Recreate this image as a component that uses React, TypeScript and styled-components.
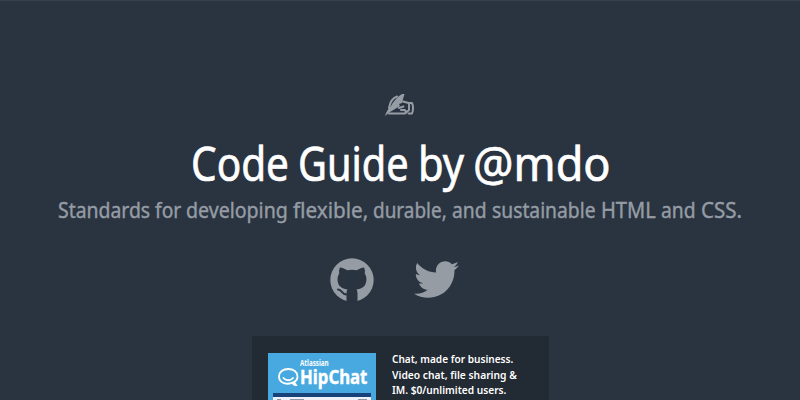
import React, { useLayoutEffect, useRef, useState } from 'react';
import styled, { createGlobalStyle } from 'styled-components';
import { FaTwitter } from 'react-icons/fa';

const GlobalStyle = createGlobalStyle`
  * { box-sizing: border-box; }
  body {
    margin: 0;
    overflow: hidden;
    background: #2a3441;
    font-family: 'Noto Sans', 'Open Sans', sans-serif;
  }
`;

const Masthead = styled.header`
  height: 400px;
  overflow: hidden;
  border-top: 1px solid #36414e;
  background: #2a3441;
  display: flex;
  flex-direction: column;
  align-items: center;
`;

const HandIcon = styled.svg`
  display: block;
  flex: none;
  width: 30px;
  height: 26px;
  margin-top: 91px;
  color: #959ca4;
`;

const Line = styled.div<{ $height: number }>`
  display: flex;
  flex: none;
  height: ${p => p.$height}px;
  line-height: ${p => p.$height}px;
`;

const Title = styled(Line).attrs({ as: 'h1' })`
  margin: 15px 0 0;
  padding-left: 1px;
  color: #fff;
  font-size: 48px;
  font-weight: 400;
  -webkit-text-stroke: 0.7px #fff;
`;

const Lead = styled(Line).attrs({ as: 'p' })`
  margin: 1px 0 0;
  color: #959ca4;
  font-size: 21.5px;
  font-weight: 400;
  -webkit-text-stroke: 0.4px #959ca4;
`;

const WordBox = styled.span<{ $width: number; $gap: number }>`
  flex: none;
  width: ${p => p.$width}px;
  margin-right: ${p => p.$gap}px;
  white-space: nowrap;

  &:last-child { margin-right: 0; }
`;

const Glyphs = styled.span`
  display: inline-block;
  transform-origin: 0 50%;
`;

/* A word condensed horizontally so that it fills its width exactly. */
function Word({ text, width, gap = 0 }: { text: string; width: number; gap?: number }) {
  const ref = useRef<HTMLSpanElement>(null);
  const [scale, setScale] = useState(1);
  useLayoutEffect(() => {
    if (ref.current) setScale(width / ref.current.offsetWidth);
  }, [width]);
  return (
    <WordBox $width={width} $gap={gap}>
      <Glyphs ref={ref} style={{ transform: `scaleX(${scale})` }}>{text}</Glyphs>
    </WordBox>
  );
}

const Social = styled.nav`
  display: flex;
  flex: none;
  gap: 40px;
  height: 45px;
  margin: 31px 11px 0 0;
  color: #959ca4;
`;

const SocialLink = styled.a`
  display: flex;
  align-items: center;
  color: inherit;
`;

const Octocat = styled.svg`
  width: 44px;
  height: 44px;
`;

const Ad = styled.aside`
  display: flex;
  flex: none;
  width: 297px;
  height: 130px;
  margin-top: 34px;
  padding: 17px 16px;
  background: #222a33;
`;

const Banner = styled.div`
  flex: none;
  width: 108px;
  height: 100px;
  background: #48a9e0;
  color: #fff;
  overflow: hidden;
`;

const Company = styled.div`
  height: 8px;
  margin: 6px 0 0 32px;
  font-size: 8px;
  line-height: 8px;
  font-weight: 700;
`;

const Brand = styled.div`
  display: flex;
  height: 20px;
  margin-left: 10px;
  gap: 1px;
  font-size: 19px;
  line-height: 20px;
  font-weight: 700;
  -webkit-text-stroke: 0.4px #fff;
`;

const Bubble = styled.svg`
  flex: none;
  width: 21px;
  height: 20px;
`;

const AppWindow = styled.div`
  width: 98px;
  height: 60px;
  margin: 6px 0 0 5px;
  background: #eef1f6;
  border-top: 4px solid #17437a;
`;

const Toolbar = styled.div`
  display: flex;
  align-items: center;
  gap: 9px;
  height: 4px;
  padding: 0 4px;
`;

const Mark = styled.span<{ $width: number; $end?: boolean }>`
  width: ${p => p.$width}px;
  height: 1px;
  margin-left: ${p => (p.$end ? 'auto' : '0')};
  background: #8b97a8;
`;

const Copy = styled.div`
  margin: -2px 0 0 15px;
  padding-left: 1px;
  color: #fff;
  font-size: 11.5px;
  font-weight: 600;
`;

const titleWords = [
  { text: 'Code', width: 98, gap: 9 },
  { text: 'Guide', width: 111, gap: 9 },
  { text: 'by', width: 46, gap: 9 },
  { text: '@mdo', width: 138 },
];

const leadWords = [
  { text: 'Standards', width: 92, gap: 5 },
  { text: 'for', width: 26, gap: 5 },
  { text: 'developing', width: 102, gap: 5 },
  { text: 'flexible,', width: 75, gap: 5 },
  { text: 'durable,', width: 74, gap: 5 },
  { text: 'and', width: 35, gap: 5 },
  { text: 'sustainable', width: 104, gap: 5 },
  { text: 'HTML', width: 55, gap: 5 },
  { text: 'and', width: 35, gap: 5 },
  { text: 'CSS.', width: 41 },
];

const copyLines = [
  { text: 'Chat, made for business.', width: 121 },
  { text: 'Video chat, file sharing &', width: 125 },
  { text: 'IM. $0/unlimited users.', width: 114 },
];

export default function App() {
  return (
    <>
      <GlobalStyle />
      <Masthead>
        <HandIcon viewBox="0 0 30 26" fill="none" stroke="currentColor" strokeWidth="2" strokeLinecap="round" strokeLinejoin="round">
          <path d="M0 24C1 20 3 17 6 14C8 10 12 5 17 2L19.500 2L18 7L17 11L14 12L15 14L10 17L5 20Z" fill="currentColor" stroke="none" />
          <path d="M4 16C5 10 7.500 6 12 4.500M4 21.500H19C21 21.500 21.500 19 19.500 18H16M18 9.500L23.500 11M24 11H27C28.300 14 28.300 18 27 21.500H23.500M24 11V18L20 21.500M14 16L18.500 14.500" />
        </HandIcon>
        <Title $height={60}>
          {titleWords.map(w => <Word key={w.text} {...w} />)}
        </Title>
        <Lead $height={32}>
          {leadWords.map((w, i) => <Word key={i} {...w} />)}
        </Lead>
        <Social>
          <SocialLink aria-label="GitHub">
            <Octocat viewBox="0 0 44 44" fill="none">
              <circle cx="22" cy="22" r="21.700" fill="currentColor" />
              <path d="M10 9.500C12.500 9.500 15 11 17 12.300Q22 11.200 27 12.300C29 11 31.500 9.500 34 9.500C35.200 12 35.100 14 34.700 15.600C37 19 37 24 34.800 27.500C33 30 30 31 26.500 31.400C27.300 32.500 27.500 34 27.500 36V44H16.500V36C16.500 34 16.700 32.500 17.500 31.400C14 31 11 30 9.200 27.500C7 24 7 19 9.300 15.600C8.900 14 8.800 12 10 9.500Z" fill="#2a3441" />
              <path d="M8 31.500C12.500 31.500 11.500 37 17 36.500" stroke="#2a3441" strokeWidth="2" strokeLinecap="round" />
            </Octocat>
          </SocialLink>
          <SocialLink aria-label="Twitter"><FaTwitter size={45} /></SocialLink>
        </Social>
        <Ad>
          <Banner>
            <Company><Word text="Atlassian" width={29} /></Company>
            <Brand>
              <Bubble viewBox="0 0 21 20" fill="none" stroke="#fff" strokeWidth="1.8" strokeLinecap="round">
                <path d="M14.500 15.600C6 19 1 14 1 9.500C1 5 5 2 10.300 2S19.500 5 19.500 9.500C19.500 12 18 14 16 15L18 18C16 18 15 17 14.500 15.600Z" />
                <path d="M5.500 11C8 14 12.500 14 15 11" />
              </Bubble>
              <Word text="HipChat" width={67} />
            </Brand>
            <AppWindow>
              <Toolbar><Mark $width={4} /><Mark $width={14} /><Mark $width={9} $end /></Toolbar>
            </AppWindow>
          </Banner>
          <Copy>
            {copyLines.map(l => <Line key={l.text} $height={15.5}><Word {...l} /></Line>)}
          </Copy>
        </Ad>
      </Masthead>
    </>
  );
}
